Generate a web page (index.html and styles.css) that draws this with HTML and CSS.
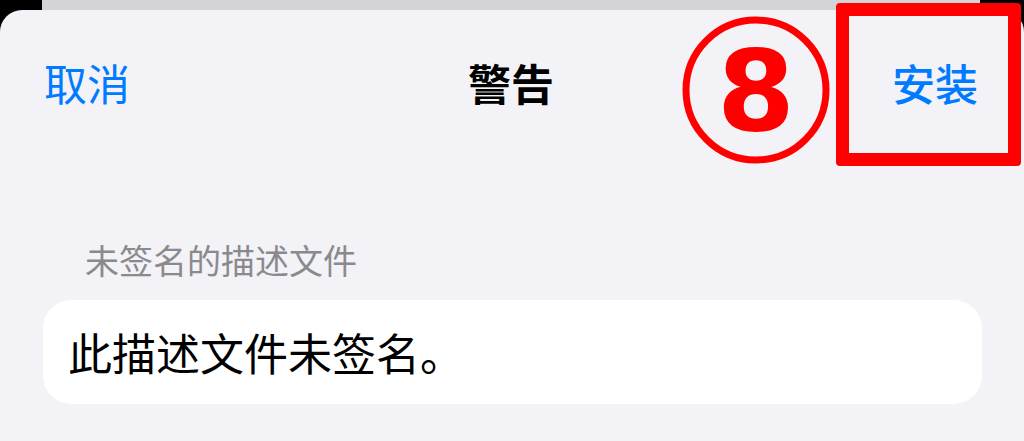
FILE: index.html
```html
<!DOCTYPE html>
<html lang="zh-CN">
<head>
  <meta charset="UTF-8">
  <meta name="viewport" content="width=device-width, initial-scale=1.0">
  <title>警告</title>
  <link rel="stylesheet" href="styles.css">
</head>
<body>
  <div class="back-card"></div>
  <div class="sheet">
    <div class="nav">
      <span class="nav-btn">取消</span>
      <span class="nav-title">警告</span>
      <span class="nav-btn strong">安装</span>
    </div>
    <div class="section-header">未签名的描述文件</div>
    <div class="group">
      <div class="row">此描述文件未签名。</div>
    </div>
  </div>

  <!-- annotation overlays -->
  <svg class="step-mark" width="148" height="148" viewBox="0 0 148 148">
    <circle cx="74" cy="74" r="70" fill="none" stroke="#ff0000" stroke-width="7"/>
    <text x="74" y="114" text-anchor="middle" font-family="DejaVu Sans, sans-serif" font-weight="bold" font-size="112" fill="#ff0000">8</text>
  </svg>
  <div class="highlight"></div>
</body>
</html>
```

FILE: styles.css
```css
body {
  margin: 0;
  background: #000;
  font-family: "Noto Sans CJK SC", "Noto Sans", sans-serif;
  height: 441px;
  overflow: hidden;
}
.back-card {
  height: 10px;
  margin: 0 44px 0 42px;
  background: #d4d3d8;
}
.sheet {
  background: #f2f2f7;
  border-radius: 22px 22px 0 0;
  height: 431px;
}
.nav {
  display: flex;
  justify-content: space-between;
  align-items: center;
  padding: 48px 46px 0 44px;
  font-size: 43px;
  line-height: 48px;
}
.nav-btn {
  color: #007aff;
}
.nav-btn.strong {
  font-weight: 500;
}
.nav-title {
  font-weight: 700;
  color: #000;
}
.section-header {
  margin: 134px 0 0 85px;
  font-size: 34px;
  line-height: 40px;
  color: #8a8a8e;
}
.group {
  margin: 20px 42px 0 43px;
  background: #fff;
  border-radius: 28px;
}
.row {
  height: 104px;
  display: flex;
  align-items: center;
  padding-left: 25px;
  font-size: 44px;
  color: #000;
}
.step-mark {
  position: absolute;
  left: 682px;
  top: 16px;
}
.highlight {
  position: absolute;
  left: 836px;
  top: 3px;
  width: 185px;
  height: 163px;
  box-sizing: border-box;
  border: 13px solid #ff0000;
  border-radius: 4px;
}
```
